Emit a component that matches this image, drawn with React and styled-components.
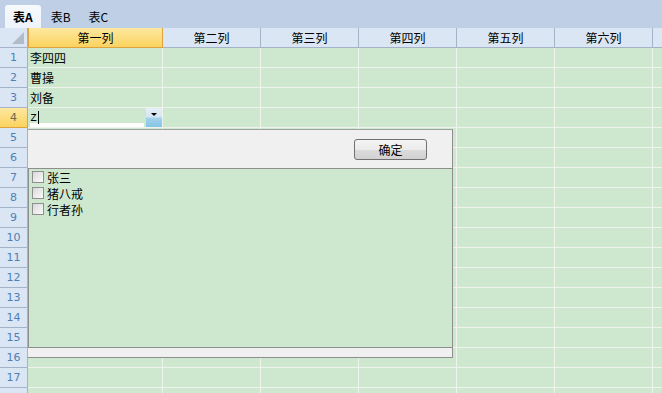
import React from "react"
import styled, { createGlobalStyle } from "styled-components"

const GlobalStyle = createGlobalStyle`
  html, body {
    margin: 0;
    padding: 0;
    background: #cde8cf;
  }
  body {
    font-family: "Liberation Sans", "Noto Sans CJK SC", sans-serif;
  }
`

const CJK = `"Noto Sans CJK SC", "Liberation Sans", sans-serif`

const Frame = styled.div`
  width: 662px;
  height: 393px;
  overflow: hidden;
  position: relative;
  background: #cde8cf;
`

const TabBar = styled.div`
  height: 28px;
  background: #bfd0e6;
  display: flex;
  align-items: flex-end;
  padding-left: 5px;
  gap: 2px;
  box-sizing: border-box;
`

const Tab = styled.div`
  height: 23px;
  padding: 0 8px;
  display: flex;
  align-items: center;
  font-family: ${CJK};
  font-size: 12px;
  font-weight: ${({ $active }) => ($active ? 700 : 400)};
  color: #000;
  border-radius: 3px 3px 0 0;
  background: ${({ $active }) =>
    $active ? "linear-gradient(#f7f9fc, #eef3fa)" : "transparent"};
`

const Grid = styled.div`
  display: grid;
  grid-template-columns: 28px 135px repeat(6, 98px);
  grid-auto-rows: 20px;
`

const Corner = styled.div`
  background: #dae6f4;
  border-right: 1px solid #a5b3c8;
  border-bottom: 1px solid #a5b3c8;
  box-sizing: border-box;
  position: relative;
  &::after {
    content: "";
    position: absolute;
    right: 3px;
    bottom: 3px;
    border-left: 12px solid transparent;
    border-bottom: 12px solid #b2bcc8;
  }
`

const ColHead = styled.div`
  background: ${({ $active }) =>
    $active ? "linear-gradient(#fde8a0, #fbd35f)" : "#dae6f4"};
  border-right: 1px solid ${({ $active }) => ($active ? "#dfa33e" : "#a5b3c8")};
  border-bottom: 1px solid ${({ $active }) => ($active ? "#dfa33e" : "#a5b3c8")};
  border-left: ${({ $active }) => ($active ? "1px solid #dfa33e" : "none")};
  box-sizing: border-box;
  display: flex;
  align-items: center;
  justify-content: center;
  font-family: ${CJK};
  font-size: 12px;
  color: #000;
`

const RowHead = styled.div`
  background: ${({ $active }) =>
    $active ? "linear-gradient(#fde8a0, #fbd35f)" : "#dae6f4"};
  border-right: 1px solid ${({ $active }) => ($active ? "#dfa33e" : "#a5b3c8")};
  border-bottom: 1px solid ${({ $active }) => ($active ? "#dfa33e" : "#a5b3c8")};
  box-sizing: border-box;
  display: flex;
  align-items: center;
  justify-content: center;
  font-family: "DejaVu Sans", sans-serif;
  font-size: 11px;
  color: ${({ $active }) => ($active ? "#6a6a50" : "#4f7fb5")};
`

const Cell = styled.div`
  background: #cde8cf;
  border-right: 1px solid #eef3ec;
  border-bottom: 1px solid #eef3ec;
  box-sizing: border-box;
  display: flex;
  align-items: center;
  padding-left: 2px;
  font-family: ${CJK};
  font-size: 12px;
  color: #000;
  position: relative;
`

const Editor = styled.div`
  flex: 1;
  height: 100%;
  display: flex;
  align-items: flex-start;
  padding-top: 3px;
  box-sizing: border-box;
  font-family: "Liberation Mono", monospace;
  font-size: 12px;
  border-bottom: 4px solid #fff;
  margin-right: 2px;
  margin-bottom: 1px;
`

const Caret = styled.span`
  display: inline-block;
  width: 1px;
  height: 13px;
  background: #000;
  margin-left: 1px;
`

const DropButton = styled.div`
  width: 16px;
  height: 19px;
  align-self: flex-start;
  background: linear-gradient(#e4eef6 0%, #d6e6f2 45%, #a0d2ec 55%, #86c4e6 100%);
  display: flex;
  justify-content: center;
  padding-top: 5px;
  box-sizing: border-box;
  &::after {
    content: "";
    border-left: 3px solid transparent;
    border-right: 3px solid transparent;
    border-top: 3px solid #000;
    height: 0;
  }
`

const Popup = styled.div`
  position: absolute;
  left: 28px;
  top: 129px;
  width: 425px;
  height: 229px;
  background: #f0f0f0;
  border-right: 1px solid #8e8e8e;
  border-bottom: 1px solid #8e8e8e;
  border-top: 1px solid #a0a0a0;
  box-sizing: border-box;
  display: flex;
  flex-direction: column;
`

const PopupTop = styled.div`
  height: 38px;
  display: flex;
  align-items: center;
  justify-content: flex-end;
  padding-right: 25px;
  border-bottom: 1px solid #8e8e8e;
`

const OkButton = styled.button`
  width: 73px;
  height: 21px;
  border: 1px solid #707070;
  border-radius: 3px;
  background: linear-gradient(#f4f4f4 0%, #ebebeb 50%, #dcdcdc 51%, #d2d2d2 100%);
  font-family: ${CJK};
  font-size: 12px;
  color: #000;
  padding: 0;
  display: flex;
  align-items: center;
  justify-content: center;
`

const List = styled.div`
  flex: 1;
  background: #cde8cf;
  border-left: 1px solid #8e8e8e;
  border-bottom: 1px solid #8e8e8e;
  padding: 0 0 0 3px;
  display: flex;
  flex-direction: column;
`

const Option = styled.label`
  height: 16px;
  display: flex;
  align-items: center;
  gap: 3px;
  font-family: ${CJK};
  font-size: 12px;
  color: #000;
`

const Box = styled.span`
  width: 12px;
  height: 12px;
  border: 1px solid #8f8f8f;
  background: linear-gradient(135deg, #d8d8d8, #fbfbfb);
  box-sizing: border-box;
`

const PopupFoot = styled.div`
  height: 9px;
`

const cols = ["第一列", "第二列", "第三列", "第四列", "第五列", "第六列", ""]
const data = { 1: "李四四", 2: "曹操", 3: "刘备" }
const options = ["张三", "猪八戒", "行者孙"]

const App = () => {
  const rows = Array.from({ length: 18 }, (_, i) => i + 1)
  return (
    <Frame>
      <GlobalStyle />
      <TabBar>
        <Tab $active>表A</Tab>
        <Tab>表B</Tab>
        <Tab>表C</Tab>
      </TabBar>
      <Grid>
        <Corner />
        {cols.map((c, i) => (
          <ColHead key={i} $active={i === 0}>
            {c}
          </ColHead>
        ))}
        {rows.map((r) => (
          <React.Fragment key={r}>
            <RowHead $active={r === 4}>{r < 18 ? r : ""}</RowHead>
            {cols.map((_, ci) => (
              <Cell key={ci}>
                {ci === 0 && r === 4 ? (
                  <>
                    <Editor>
                      z<Caret />
                    </Editor>
                    <DropButton />
                  </>
                ) : ci === 0 ? (
                  data[r]
                ) : null}
              </Cell>
            ))}
          </React.Fragment>
        ))}
      </Grid>
      <Popup>
        <PopupTop>
          <OkButton>确定</OkButton>
        </PopupTop>
        <List>
          {options.map((o) => (
            <Option key={o}>
              <Box />
              {o}
            </Option>
          ))}
        </List>
        <PopupFoot />
      </Popup>
    </Frame>
  )
}

export default App
